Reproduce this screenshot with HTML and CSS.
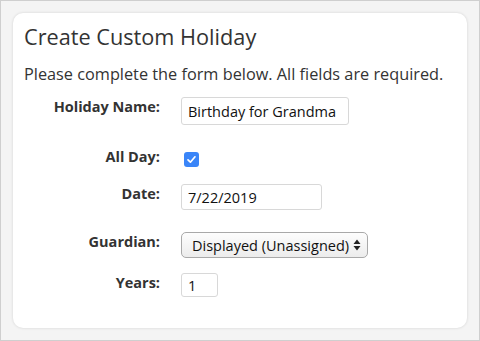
FILE: index.html
```html
<!DOCTYPE html>
<html lang="en">
<head>
<meta charset="utf-8">
<title>Create Custom Holiday</title>
<link rel="stylesheet" href="styles.css">
</head>
<body>
<div class="frame">
  <div class="card">
    <h1 class="title">Create Custom Holiday</h1>
    <p class="intro">Please complete the form below. All fields are required.</p>
    <div class="form">
      <div class="row row-name">
        <label class="label">Holiday Name:</label>
        <input class="field field-name" type="text" value="Birthday for Grandma">
      </div>
      <div class="row row-allday">
        <label class="label">All Day:</label>
        <span class="check"><svg width="15" height="15" viewBox="0 0 15 15"><path d="M4 7.8 L6.4 10.2 L11 4.8" fill="none" stroke="#fff" stroke-width="1.7" stroke-linecap="round" stroke-linejoin="round"/></svg></span>
      </div>
      <div class="row row-date">
        <label class="label">Date:</label>
        <input class="field field-date" type="text" value="7/22/2019">
      </div>
      <div class="row row-guardian">
        <label class="label">Guardian:</label>
        <div class="select">
          <span class="select-text">Displayed (Unassigned)</span>
          <svg class="arrows" width="8" height="12" viewBox="0 0 8 12"><path d="M4 0.5 L7.5 5 L0.5 5 Z M4 11.5 L7.5 7 L0.5 7 Z" fill="#222"/></svg>
        </div>
      </div>
      <div class="row row-years">
        <label class="label">Years:</label>
        <input class="field field-years" type="text" value="1">
      </div>
    </div>
  </div>
</div>
</body>
</html>
```
FILE: styles.css
```css
* { box-sizing: border-box; }
html, body { margin: 0; padding: 0; }
body {
  font-family: "Open Sans", "Liberation Sans", sans-serif;
  color: #333;
}
.frame {
  width: 480px;
  height: 341px;
  border: 1px solid #cfcfcf;
  background: #f4f4f4;
  padding: 12px;
}
.card {
  width: 454px;
  height: 315px;
  background: #fff;
  border-radius: 10px;
  box-shadow: 0 0 3px rgba(0,0,0,0.14);
  padding: 9px 11px 0 11px;
}
.title {
  margin: 0;
  font-size: 21.7px;
  line-height: 30px;
  font-weight: 400;
  color: #333;
}
.intro {
  margin: 10px 0 0 0;
  font-size: 16.3px;
  line-height: 24px;
  color: #333;
  white-space: nowrap;
}
.form {
  margin-top: 11px;
}
.row {
  display: flex;
  align-items: flex-start;
}
.label {
  width: 136px;
  flex: none;
  text-align: right;
  font-weight: 700;
  font-size: 14.5px;
  line-height: 20px;
  color: #333;
  margin-right: 21px;
  margin-top: 0;
}
.row-allday { margin-top: 22px; }
.row-date { margin-top: 17px; }
.row-guardian { margin-top: 22px; }
.row-years { margin-top: 15px; }
.field {
  font-family: "Open Sans", "Liberation Sans", sans-serif;
  font-size: 14.5px;
  color: #111;
  border: 1px solid #d8d8d8;
  border-radius: 3px;
  background: #fff;
  padding: 0 6px;
  margin: 0;
  outline: none;
}
.field-name { width: 168px; height: 28px; }
.field-date { width: 141px; height: 26px; }
.field-years { width: 37px; height: 24px; }
.check {
  width: 15px;
  height: 15px;
  margin-top: 5px;
  margin-left: 3px;
  border-radius: 3px;
  background: #3a85f8;
  display: flex;
}
.select {
  width: 187px;
  height: 26px;
  border: 1px solid #a9a9a9;
  border-radius: 5px;
  background: linear-gradient(#fdfdfd, #ececec);
  display: flex;
  align-items: center;
  justify-content: space-between;
  padding: 0 6px 0 10px;
}
.select-text {
  font-size: 14.5px;
  color: #111;
  white-space: nowrap;
}
.arrows { flex: none; }
```
